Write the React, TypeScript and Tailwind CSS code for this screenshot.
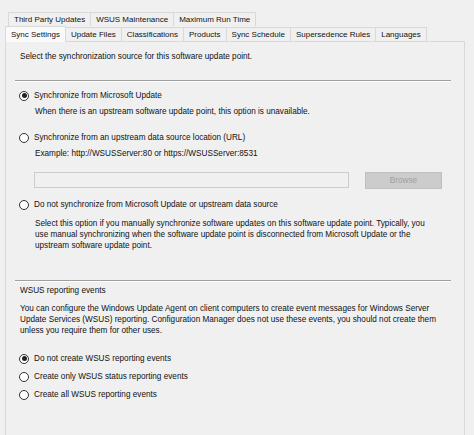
import React from 'react';

const topTabs = ['Third Party Updates', 'WSUS Maintenance', 'Maximum Run Time'];
const mainTabs = ['Update Files', 'Classifications', 'Products', 'Sync Schedule', 'Supersedence Rules', 'Languages'];

function Radio({ checked, label }: { checked?: boolean; label: string }) {
  return (
    <div className="flex items-center h-[11px] whitespace-nowrap">
      <span className="w-[10px] h-[10px] rounded-full border border-[#333333] bg-white flex items-center justify-center shrink-0">
        {checked && <span className="w-[5px] h-[5px] rounded-full bg-[#222222]" />}
      </span>
      <span className="ml-[5px]">{label}</span>
    </div>
  );
}

export default function App() {
  return (
    <div className="w-[474px] h-[435px] bg-[#f0f0f0] overflow-hidden font-['Liberation_Sans',Arial,sans-serif] text-[8px] leading-[11px] text-[#111111]">
      {/* tab strip, upper row */}
      <div className="flex pt-[12px] pl-[8px]">
        {topTabs.map((t) => (
          <div key={t} className="h-[14px] px-[5px] border border-b-0 border-[#d9d9d9] -ml-px first:ml-0 flex items-center whitespace-nowrap">
            {t}
          </div>
        ))}
      </div>
      {/* tab strip, lower row */}
      <div className="flex pl-[5px] h-[15px] items-end relative z-10">
        <div className="h-[16px] px-[5px] border border-b-0 border-[#d9d9d9] bg-[#fafafa] flex items-center whitespace-nowrap -mb-px">
          Sync Settings
        </div>
        {mainTabs.map((t) => (
          <div key={t} className="h-[14px] px-[5px] border border-b-0 border-l-0 border-[#d9d9d9] flex items-center whitespace-nowrap">
            {t}
          </div>
        ))}
      </div>

      {/* tab page */}
      <div className="ml-[5px] w-[460px] h-[400px] border border-[#d9d9d9] bg-[#f0f0f0] text-[8.2px] leading-[11px]">
        <div className="pl-[14px] pt-[9px]">Select the synchronization source for this software update point.</div>
        <div className="ml-[9px] mr-[13px] mt-[18px] border-t border-[#a0a0a0] border-b border-b-white" />

        <div className="pl-[13px] mt-[8px]">
          <Radio checked label="Synchronize from Microsoft Update" />
          <div className="pl-[16px] mt-[5px]">When there is an upstream software update point, this option is unavailable.</div>

          <div className="mt-[15px]">
            <Radio label="Synchronize from an upstream data source location (URL)" />
          </div>
          <div className="pl-[16px] mt-[5px]">Example: http://WSUSServer:80 or https://WSUSServer:8531</div>
          <div className="flex pl-[15px] mt-[13px]">
            <div className="w-[315px] h-[16px] border border-[#cccccc] bg-[#f0f0f0]" />
            <div className="ml-[16px] w-[77px] h-[17px] border border-[#bfbfbf] bg-[#cccccc] text-[#a0a0a0] flex items-center justify-center">
              Browse
            </div>
          </div>

          <div className="mt-[10px]">
            <Radio label="Do not synchronize from Microsoft Update or upstream data source" />
          </div>
          <div className="pl-[16px] mt-[8px] whitespace-nowrap">
            Select this option if you manually synchronize software updates on this software update point. Typically, you
            <br />
            use manual synchronizing when the software update point is disconnected from Microsoft Update or the
            <br />
            upstream software update point.
          </div>
        </div>

        <div className="ml-[9px] mr-[13px] mt-[29px] border-t border-[#a0a0a0] border-b border-b-white" />
        <div className="pl-[14px] mt-[3px]">WSUS reporting events</div>
        <div className="pl-[14px] mt-[7px] whitespace-nowrap">
          You can configure the Windows Update Agent on client computers to create event messages for Windows Server
          <br />
          Update Services (WSUS) reporting. Configuration Manager does not use these events, you should not create them
          <br />
          unless you require them for other uses.
        </div>

        <div className="pl-[13px] mt-[17px] flex flex-col gap-[7px]">
          <Radio checked label="Do not create WSUS reporting events" />
          <Radio label="Create only WSUS status reporting events" />
          <Radio label="Create all WSUS reporting events" />
        </div>
      </div>
    </div>
  );
}
